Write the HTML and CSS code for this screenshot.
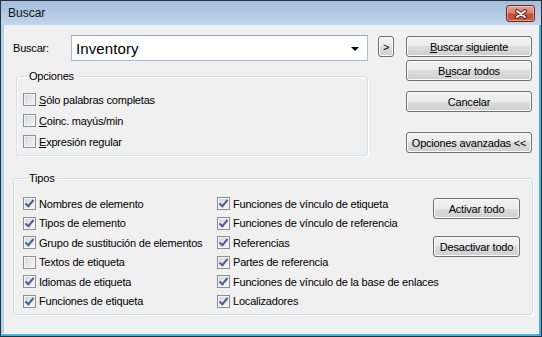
FILE: index.html
```html
<!DOCTYPE html>
<html lang="es">

<head>
    <meta charset="UTF-8">
    <meta name="viewport" content="width=device-width, initial-scale=1.0">
    <title>Buscar</title>
    <link rel="stylesheet" href="styles.css">
</head>

<body>
    <div class="window">
        <div class="titlebar">
            <span class="title">Buscar</span>
            <span class="close">
                <svg width="14" height="10" viewBox="0 0 14 10">
                    <path class="x-out" d="M3,2 L11,8 M11,2 L3,8"></path>
                    <path class="x-in" d="M3,2 L11,8 M11,2 L3,8"></path>
                </svg>
            </span>
        </div>
        <div class="client">
            <div class="top">
                <div class="main">
                    <div class="search-row">
                        <span class="search-label">Buscar:</span>
                        <div class="combo">
                            <span class="combo-text">Inventory</span>
                            <span class="combo-arrow"></span>
                        </div>
                    </div>
                    <fieldset class="group options">
                        <legend>Opciones</legend>
                        <label class="check"><span class="cb"></span><span><u>S</u>ólo palabras completas</span></label>
                        <label class="check"><span class="cb"></span><span><u>C</u>oinc. mayús/min</span></label>
                        <label class="check"><span class="cb"></span><span><u>E</u>xpresión regular</span></label>
                    </fieldset>
                </div>
                <button class="btn btn-more">&gt;</button>
                <div class="actions">
                    <button class="btn"><u>B</u>uscar siguiente</button>
                    <button class="btn btn-all">B<u>u</u>scar todos</button>
                    <button class="btn btn-cancel">Cancelar</button>
                    <button class="btn btn-adv">Opciones avanzadas &lt;&lt;</button>
                </div>
            </div>

            <fieldset class="group types">
                <legend>Tipos</legend>
                <div class="types-grid">
                    <div class="col col1">
                        <label class="check"><span class="cb on"></span><span>Nombres de elemento</span></label>
                        <label class="check"><span class="cb on"></span><span>Tipos de elemento</span></label>
                        <label class="check"><span class="cb on"></span><span>Grupo de sustitución de elementos</span></label>
                        <label class="check"><span class="cb"></span><span>Textos de etiqueta</span></label>
                        <label class="check"><span class="cb on"></span><span>Idiomas de etiqueta</span></label>
                        <label class="check"><span class="cb on"></span><span>Funciones de etiqueta</span></label>
                    </div>
                    <div class="col col2">
                        <label class="check"><span class="cb on"></span><span>Funciones de vínculo de etiqueta</span></label>
                        <label class="check"><span class="cb on"></span><span>Funciones de vínculo de referencia</span></label>
                        <label class="check"><span class="cb on"></span><span>Referencias</span></label>
                        <label class="check"><span class="cb on"></span><span>Partes de referencia</span></label>
                        <label class="check"><span class="cb on"></span><span>Funciones de vínculo de la base de enlaces</span></label>
                        <label class="check"><span class="cb on"></span><span>Localizadores</span></label>
                    </div>
                    <div class="type-buttons">
                        <button class="btn btn-type">Activar todo</button>
                        <button class="btn btn-type btn-off">Desactivar todo</button>
                    </div>
                </div>
            </fieldset>
        </div>
    </div>
</body>

</html>
```

FILE: styles.css
```css
* {
    box-sizing: border-box;
}

body {
    margin: 0;
    font-family: "Liberation Sans", Arial, sans-serif;
    font-size: 11px;
    letter-spacing: -0.2px;
    color: #000;
    overflow: hidden;
}

.window {
    width: 542px;
    height: 337px;
    display: flex;
    flex-direction: column;
    border: 1px solid #26333d;
    background: #3db6e7;
    padding: 0 2px 2px 0;
}

.titlebar {
    height: 24px;
    margin-right: -2px;
    display: flex;
    align-items: flex-start;
    justify-content: space-between;
    background: linear-gradient(#a3bddb, #c0d5eb);
    padding: 0 6px 0 7px;
}

.title {
    font-size: 12px;
    letter-spacing: 0;
    margin-top: 5px;
    color: #111;
}

.close {
    width: 29px;
    height: 17px;
    margin-top: 4px;
    border: 1px solid #6e2a24;
    border-radius: 3px;
    background: linear-gradient(#e8a595 0%, #d8816f 45%, #c24b35 55%, #c75a42 100%);
    box-shadow: inset 0 0 0 1px rgba(255, 220, 210, 0.5);
    display: flex;
    align-items: center;
    justify-content: center;
}

.close svg {
    fill: none;
    stroke-linecap: round;
}

.close .x-out {
    stroke: #5a2620;
    stroke-width: 4;
}

.close .x-in {
    stroke: #fff;
    stroke-width: 2;
}

.client {
    flex: 1;
    background: #f0f0f0;
    border-left: 3px solid #b2d2ec;
    border-right: 1px solid #fafafa;
    border-bottom: 1px solid #fafafa;
    padding: 10px 0 0 9px;
}

.top {
    display: flex;
    align-items: flex-start;
}

.main {
    width: 355px;
}

.search-row {
    display: flex;
    align-items: center;
    height: 26px;
}

.search-label {
    width: 58px;
}

.combo {
    width: 297px;
    height: 26px;
    background: #fff;
    border: 1px solid #a6bcd3;
    border-top-color: #8fa9c4;
    display: flex;
    align-items: center;
    justify-content: space-between;
    padding: 0 8px 0 4px;
}

.combo-text {
    font-size: 15px;
    letter-spacing: 0.1px;
}

.combo-arrow {
    width: 0;
    height: 0;
    border-left: 4px solid transparent;
    border-right: 4px solid transparent;
    border-top: 4px solid #000;
    margin-top: 2px;
}

.group {
    margin: 0;
    border: 1px solid #d5dfe5;
    border-radius: 3px;
    box-shadow: inset 1px 1px 0 #fff, 1px 1px 0 #fff;
}

.group legend {
    padding: 0 2px;
    margin-left: 4px;
    line-height: 14px;
}

.options {
    width: 352px;
    margin: 8px 0 0 3px;
    padding: 6px 6px 3px 6px;
}

.check {
    display: flex;
    align-items: center;
    gap: 3px;
    height: 21px;
    white-space: nowrap;
}

.cb {
    position: relative;
    flex: none;
    width: 13px;
    height: 13px;
    border: 1px solid #8e8f8f;
    background: linear-gradient(135deg, #d3d5d8, #f7f7f7);
    box-shadow: inset 0 0 0 1px #f4f4f4;
}

.cb.on::after {
    content: "";
    position: absolute;
    left: 3px;
    top: 0px;
    width: 3px;
    height: 7px;
    border-right: 2px solid #4a5f95;
    border-bottom: 2px solid #4a5f95;
    transform: rotate(40deg);
}

.btn {
    font-family: inherit;
    font-size: 11px;
    letter-spacing: -0.2px;
    color: #000;
    height: 21px;
    padding: 0;
    border: 1px solid #707070;
    border-radius: 3px;
    background: linear-gradient(#f2f2f2 0%, #ebebeb 50%, #dddddd 50%, #cfcfcf 100%);
    box-shadow: inset 0 0 0 1px #fbfbfb;
    white-space: nowrap;
}

.btn-more {
    width: 16px;
    margin: 1px 0 0 10px;
}

.actions {
    width: 126px;
    margin: 1px 0 0 12px;
    display: flex;
    flex-direction: column;
}

.btn-all {
    margin-top: 3px;
}

.btn-cancel {
    margin-top: 10px;
}

.btn-adv {
    margin-top: 20px;
}

.types {
    width: 520px;
    margin-top: 15px;
    padding: 9px 0 3px 9px;
}

.types-grid {
    display: flex;
}

.types .check {
    height: 19.5px;
}

.col1 {
    width: 194px;
}

.col2 {
    width: 216px;
}

.type-buttons {
    display: flex;
    flex-direction: column;
    padding-top: 4px;
}

.btn-type {
    width: 87px;
}

.btn-off {
    margin-top: 17px;
}
```
